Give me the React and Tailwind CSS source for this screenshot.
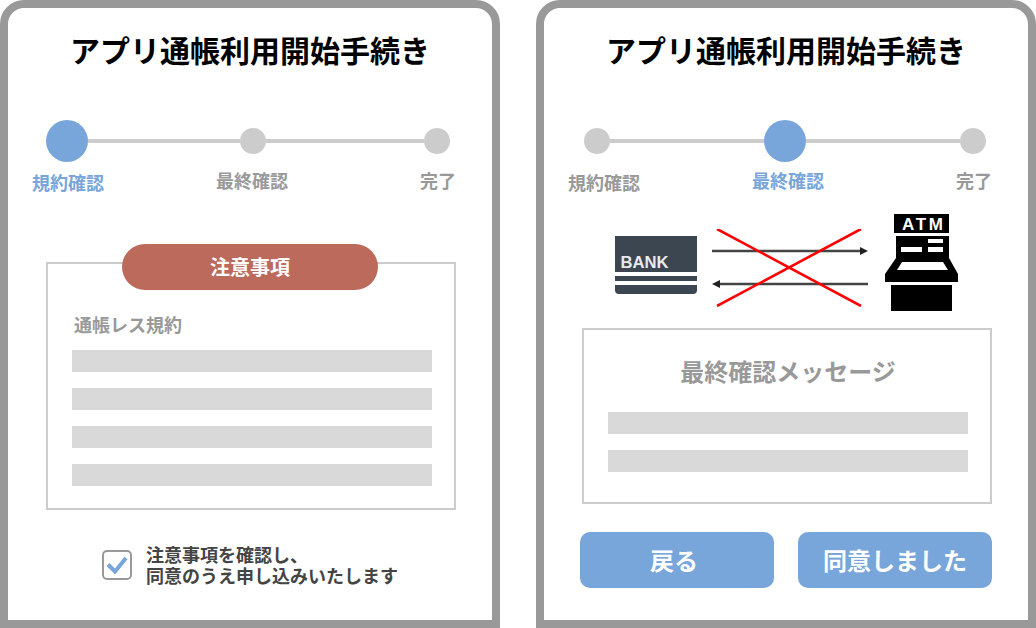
function BankIcon() {
  return (
    <svg width="84" height="60" viewBox="0 0 84 60" className="shrink-0">
      <path d="M1 1h82v36H1z" fill="#3c4650" />
      <text x="6.5" y="33" fontFamily="'Liberation Sans', sans-serif" fontWeight="700" fontSize="17" textLength="48" lengthAdjust="spacingAndGlyphs" fill="#e8eaec">BANK</text>
      <path d="M1 41h82v5H1z" fill="#3c4650" />
      <path d="M1 50h82v5a4 4 0 0 1-4 4H5a4 4 0 0 1-4-4z" fill="#3c4650" />
    </svg>
  );
}

function CrossedArrows() {
  return (
    <svg width="156" height="78" viewBox="0 0 156 78" className="shrink-0">
      <path d="M0 22h151" stroke="#444" strokeWidth="2.4" />
      <path d="M148 18l8 4-8 4z" fill="#222" />
      <path d="M156 55H5" stroke="#444" strokeWidth="2.4" />
      <path d="M8 51L0 55l8 4z" fill="#222" />
      <path d="M5 0l144 77M149 0L5 77" stroke="#ff0000" strokeWidth="2.6" />
    </svg>
  );
}

function AtmIcon() {
  return (
    <svg width="74" height="98" viewBox="0 0 74 98" className="shrink-0">
      <path d="M9 0h55v19H9z" fill="#000" />
      <text x="17" y="16" fontFamily="'Liberation Sans', sans-serif" fontWeight="700" fontSize="17" textLength="41" fill="#fff">ATM</text>
      <path d="M11 22h53v22l9 16v8H0v-8l11-16z" fill="#000" />
      <path d="M16 33h21v5H16zM43 25h15v4H43zM43 33h15v5H43z" fill="#fff" />
      <path d="M17 48h41l5 8H12z" fill="#fff" />
      <path d="M6 71h61v26H6z" fill="#000" />
    </svg>
  );
}

function Step({ active }) {
  return active ? (
    <div className="w-[42px] h-[42px] rounded-full bg-[#78a5da] shrink-0" />
  ) : (
    <div className="w-[26px] h-[26px] rounded-full bg-[#cccccc] shrink-0" />
  );
}

function GrayRows() {
  return (
    <div className="flex flex-col gap-4">
      <div className="h-[22px] bg-[#d9d9d9]" />
      <div className="h-[22px] bg-[#d9d9d9]" />
    </div>
  );
}

function Title() {
  return (
    <h1 className="pt-[23px] h-[76px] text-center text-[30px] leading-[36px] font-bold text-black">
      アプリ通帳利用開始手続き
    </h1>
  );
}

function Panel({ children }) {
  return (
    <div className="w-[500px] h-[628px] shrink-0 border-8 border-[#999999] rounded-t-[24px] bg-white overflow-hidden">
      {children}
    </div>
  );
}

export default function App() {
  return (
    <div className="flex justify-between w-[1036px] h-[628px] bg-white font-['Noto_Sans_CJK_JP','Noto_Sans',sans-serif]">
      {/* LEFT */}
      <Panel>
        <Title />
        <div className="flex items-center h-[42px] mt-[36px] ml-[38px] w-[404px]">
          <Step active />
          <div className="w-[152px] h-1 bg-[#cccccc]" />
          <Step />
          <div className="flex-1 h-1 bg-[#cccccc]" />
          <Step />
        </div>
        <div className="flex items-start h-[26px] ml-[24px] mt-[5px] text-[18px] leading-[26px] font-bold text-[#999999]">
          <span className="mt-[2px] text-[#78a5da]">規約確認</span>
          <span className="ml-[112px]">最終確認</span>
          <span className="ml-[132px]">完了</span>
        </div>
        <div className="relative ml-[38px] mr-[36px] mt-[69px] h-[248px] border-2 border-[#cccccc] pl-[24px] pr-[22px] pt-[47px]">
          <div className="absolute left-[74px] -top-[20px] w-[256px] h-[46px] rounded-full bg-[#bc6a5b] flex items-center justify-center text-[20px] font-bold text-white">
            注意事項
          </div>
          <div className="text-[18px] leading-[26px] font-bold text-[#999999] pl-[2px]">通帳レス規約</div>
          <div className="mt-[13px] flex flex-col gap-4">
            <GrayRows />
            <GrayRows />
          </div>
        </div>
        <div className="flex items-center ml-[94px] mt-[34px]">
          <div className="w-[30px] h-[30px] rounded-[5px] border-2 border-[#999999] flex items-center justify-center shrink-0">
            <svg width="22" height="18" viewBox="0 0 22 18" fill="none" stroke="#78a5da" strokeWidth="4">
              <path d="M2 8.5l7 7L20 2" />
            </svg>
          </div>
          <div className="ml-[14px] text-[18px] leading-[21px] font-bold text-[#444444]">
            注意事項を確認し、
            <br />
            同意のうえ申し込みいたします
          </div>
        </div>
      </Panel>

      {/* RIGHT */}
      <Panel>
        <Title />
        <div className="flex items-center h-[42px] mt-[36px] ml-[40px] w-[402px]">
          <Step />
          <div className="flex-1 h-1 bg-[#cccccc]" />
          <Step active />
          <div className="flex-1 h-1 bg-[#cccccc]" />
          <Step />
        </div>
        <div className="flex items-start h-[26px] ml-[24px] mt-[5px] text-[18px] leading-[26px] font-bold text-[#999999]">
          <span className="mt-[2px]">規約確認</span>
          <span className="ml-[112px] text-[#78a5da]">最終確認</span>
          <span className="ml-[132px]">完了</span>
        </div>
        <div className="flex items-start h-[98px] mt-[21px] pl-[70px]">
          <div className="mt-[21px]">
            <BankIcon />
          </div>
          <div className="ml-[14px] mt-[15px]">
            <CrossedArrows />
          </div>
          <div className="ml-[17px]">
            <AtmIcon />
          </div>
        </div>
        <div className="ml-[38px] mr-[36px] mt-[16px] h-[176px] border-2 border-[#cccccc] pl-[24px] pr-[22px] pt-[23px]">
          <div className="text-center text-[24px] leading-[36px] font-bold text-[#999999]">最終確認メッセージ</div>
          <div className="mt-[23px]">
            <GrayRows />
          </div>
        </div>
        <div className="flex gap-6 ml-[36px] mr-[36px] mt-[28px]">
          <button className="w-[194px] h-[56px] pr-[6px] rounded-[10px] bg-[#78a5da] text-[24px] font-bold text-white">戻る</button>
          <button className="w-[194px] h-[56px] rounded-[10px] bg-[#78a5da] text-[24px] font-bold text-white">同意しました</button>
        </div>
      </Panel>
    </div>
  );
}
